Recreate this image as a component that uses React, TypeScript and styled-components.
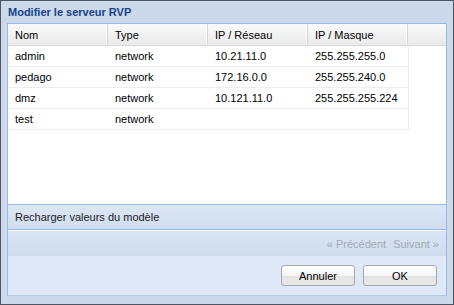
import React from "react";
import styled, { createGlobalStyle } from "styled-components";

const GlobalStyle = createGlobalStyle`
  html, body {
    margin: 0;
    padding: 0;
    background: #ffffff;
  }
  body {
    font-family: "Liberation Sans", Arial, sans-serif;
    font-size: 11px;
  }
`;

interface IServer {
  name: string;
  type: string;
  network: string;
  mask: string;
}

const servers: IServer[] = [
  { name: "admin", type: "network", network: "10.21.11.0", mask: "255.255.255.0" },
  { name: "pedago", type: "network", network: "172.16.0.0", mask: "255.255.240.0" },
  { name: "dmz", type: "network", network: "10.121.11.0", mask: "255.255.255.224" },
  { name: "test", type: "network", network: "", mask: "" },
];

const columns = ["Nom", "Type", "IP / Réseau", "IP / Masque"];

const Window = styled.div`
  width: 454px;
  height: 305px;
  box-sizing: border-box;
  border: 1px solid #4d5560;
  background: #cbd9ea;
  display: flex;
  flex-direction: column;
  padding: 0 6px 8px 6px;
`;

const Header = styled.div`
  height: 22px;
  display: flex;
  align-items: center;
  padding-left: 1px;
  font-weight: bold;
  font-size: 11px;
  color: #15428b;
`;

const Body = styled.div`
  flex: 1;
  display: flex;
  flex-direction: column;
  border: 1px solid #99bbe8;
  border-bottom: 1px solid #b5c8de;
  background: #dfe8f6;
`;

const Grid = styled.div`
  height: 180px;
  background: #ffffff;
  display: flex;
  flex-direction: column;
`;

const HeadRow = styled.div`
  display: flex;
  height: 21px;
  background: linear-gradient(#fafafa, #eaeaea);
  border-bottom: 1px solid #d7d7d7;
`;

const HeadCell = styled.div<{ $w?: number }>`
  width: ${(p) => (p.$w ? `${p.$w}px` : "auto")};
  flex: ${(p) => (p.$w ? "none" : 1)};
  box-sizing: border-box;
  padding-left: 7px;
  display: flex;
  align-items: center;
  color: #000;
  border-right: 1px solid #d5d5d5;
  box-shadow: inset -1px 0 0 #ffffff;
  &:last-child {
    border-right: none;
    box-shadow: none;
  }
`;

const Row = styled.div`
  display: flex;
  width: 401px;
  height: 21px;
  box-sizing: border-box;
  border-bottom: 1px solid #ededed;
  border-right: 1px solid #ededed;
`;

const Cell = styled.div`
  width: 100px;
  box-sizing: border-box;
  padding-left: 7px;
  display: flex;
  align-items: center;
  color: #000;
`;

const Toolbar = styled.div`
  height: 26px;
  box-sizing: border-box;
  border-top: 1px solid #99bbe8;
  border-bottom: 1px solid #99bbe8;
  background: linear-gradient(#dce7f5, #d0ddee);
  display: flex;
  align-items: center;
  padding-left: 7px;
  color: #222;
`;

const PagingBar = styled.div`
  height: 26px;
  box-sizing: border-box;
  border-top: 1px solid #ffffff;
  background: linear-gradient(#d9e4f3, #d0dced);
  display: flex;
  align-items: center;
  justify-content: flex-end;
  gap: 7px;
  padding-right: 7px;
  color: #a3a9b3;
`;

const Footer = styled.div`
  flex: 1;
  display: flex;
  justify-content: flex-end;
  align-items: center;
  gap: 8px;
  padding-right: 9px;
`;

const Button = styled.button`
  width: 74px;
  height: 21px;
  box-sizing: border-box;
  border: 1px solid #a7a7a7;
  border-radius: 3px;
  background: linear-gradient(#ffffff 0%, #f5f5f5 50%, #e4e4e4 55%, #e8e8e8 100%);
  font-family: "Liberation Sans", Arial, sans-serif;
  font-size: 11px;
  color: #000;
  padding: 0;
  cursor: pointer;
`;

export default function App() {
  return (
    <>
      <GlobalStyle />
      <Window>
        <Header>Modifier le serveur RVP</Header>
        <Body>
          <Grid>
            <HeadRow>
              {columns.map((c) => (
                <HeadCell key={c} $w={100}>
                  {c}
                </HeadCell>
              ))}
              <HeadCell />
            </HeadRow>
            {servers.map((s) => (
              <Row key={s.name}>
                <Cell>{s.name}</Cell>
                <Cell>{s.type}</Cell>
                <Cell>{s.network}</Cell>
                <Cell>{s.mask}</Cell>
              </Row>
            ))}
          </Grid>
          <Toolbar>Recharger valeurs du modèle</Toolbar>
          <PagingBar>
            <span>« Précédent</span>
            <span>Suivant »</span>
          </PagingBar>
          <Footer>
            <Button>Annuler</Button>
            <Button>OK</Button>
          </Footer>
        </Body>
      </Window>
    </>
  );
}
